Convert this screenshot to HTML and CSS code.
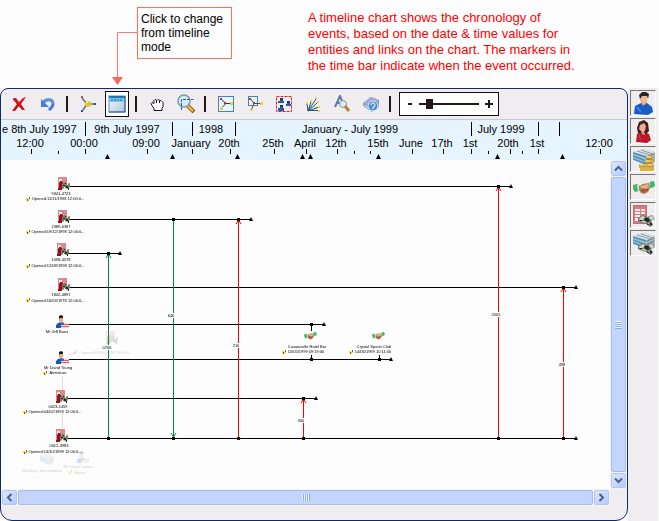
FILE: index.html
```html
<!DOCTYPE html>
<html lang="en">
<head>
<meta charset="utf-8">
<title>Timeline chart</title>
<link rel="stylesheet" href="styles.css">
</head>
<body>
<svg class="defs" aria-hidden="true">
  <symbol id="account" viewBox="0 0 13 14">
    <rect x="1" y="0" width="9" height="10" fill="#d88a8e"/>
    <path d="M2 2h3v3H2zM6 6h3v2H6z" fill="#f8e6e6"/>
    <path d="M3 4h2v1h1v4H5v4H1v-2l1-1V6l1-1z" fill="#96101c"/>
    <path d="M5 7l3-2 2 2 3-1v4l-2 2-3-1-3 1z" fill="#77806a"/>
    <path d="M6 8h2v1H6zM9 9h2v2H9zM8 6h1v1H8zM11 11h1v2h-1z" fill="#23281e"/>
    <path d="M7 10h1v1H7zM10 7h1v1h-1z" fill="#e9eee0"/>
  </symbol>
  <symbol id="person" viewBox="0 0 13 14">
    <path d="M0 10l2-2 3-1 4 1 1 2v3H0z" fill="#145caf"/>
    <path d="M3 2h4v4L5 8 3 6z" fill="#e7ab86"/>
    <path d="M3 4V1l2-1 2 1v2H4z" fill="#20191a"/>
    <rect x="5" y="8" width="8" height="5" fill="#f3dadd"/>
    <path d="M5 9h8v1H5zM5 11h8v1H5z" fill="#dc6470"/>
    <rect x="5" y="8" width="3" height="2" fill="#4361b1"/>
  </symbol>
  <symbol id="shake" viewBox="0 0 22 14">
    <path d="M0 4l4-1 3 3-1 4-4 1-2-3zM21 0l-5 1-1 5 4 1 3-2z" fill="#3dba64"/>
    <path d="M4 4l3 1v4l-2 1zM17 1l-2 1v4l2 1z" fill="#d5f0da"/>
    <path d="M6 5l4-2 6-1 1 5-2 4-4 2-3-1-2-3z" fill="#b8744d"/>
    <path d="M7 5l4-1 4-1 1 3-3 2-5-1z" fill="#deb08c"/>
    <path d="M8 9l3 2M10 8l3 2M13 8l2 1" stroke="#774227" fill="none"/>
  </symbol>
  <symbol id="check" viewBox="0 0 4 4">
    <path d="M0 1h2v1h2v1H3v1H1V3H0z" fill="#f0e023"/><path d="M3 0h1v2H3zM1 2h1v2H1z" fill="#666235"/>
  </symbol>
  <symbol id="servers" viewBox="0 0 22 20">
    <path d="M0 3l10-3 12 3v10l-8 4L0 10z" fill="#a7bac5"/>
    <path d="M0 3l10-3 12 3-8 4z" fill="#dde3e5"/>
    <path d="M0 4l13 4M0 7l13 5M0 10l13 5" stroke="#4594c6" stroke-width="1.500"/>
    <path d="M4 2l13 4M8 1l12 4" stroke="#8f9da4"/>
    <path d="M14 8l7-3M14 11l7-3M14 14l7-3" stroke="#717b7e"/>
  </symbol>
  <symbol id="cash" viewBox="0 0 17 13">
    <path d="M0 4l5-3 4 2 5-2 3 4-4 2 2 4-3 2-3-3-5-1-4-2z" fill="#6b7468"/>
    <path d="M1 5l4-3 2 2-4 3zM11 3l3-1 2 3-3 1zM10 9l3 2M3 8l4-1 1 2" fill="#d4dacd" stroke="#b9c2b2"/>
    <path d="M6 4h4l2 2-2 2-3-1zM12 9h2v2h-2zM9 10h2v1H9zM2 6h2v1H2z" fill="#20291f"/>
  </symbol>
</svg>

<header class="notes">
  <svg class="pointer" viewBox="0 0 25 88" aria-hidden="true">
    <path d="M25 32.500H5.500V79" fill="none" stroke="#fd7b6c"/>
    <path d="M0 77h11l-5.500 8z" fill="#fb6a58"/>
  </svg>
  <p class="callout">Click to change<br>from timeline<br>mode</p>
  <p class="intro">A timeline chart shows the chronology of<br>events, based on the date &amp; time values for<br>entities and links on the chart. The markers in<br>the time bar indicate when the event occurred.</p>
</header>

<main class="app">
  <section class="window">
    <div class="toolbar">
      <div class="group">
        <button aria-label="Delete"><svg width="18" height="18"><path d="M3 3l3 0 3 4 4-4 3-1-5 7 4 6-3 0-3-4-4 5-3 0 5-7z" fill="#e3131a"/><path d="M3 4l9 10M4 15l5-6" stroke="#8c1212" fill="none"/></svg></button>
        <button aria-label="Undo"><svg width="18" height="18"><path d="M4 8c3-5 10-4 10 1 0 3-2 4-4 6" fill="none" stroke="#477bd0" stroke-width="3"/><path d="M4 8c3-5 10-4 10 1" fill="none" stroke="#8db4ee"/><path d="M2 4v8h8z" fill="#4a7ed2"/></svg></button>
      </div>
      <span class="divider"></span>
      <div class="group">
        <button aria-label="Link layout"><svg width="18" height="18"><path d="M3 3l5 6-4 6M9 9h7" fill="none" stroke="#4b718c" stroke-width="1.500"/><circle cx="9" cy="9" r="3" fill="#e7c617"/><path d="M7 7h2v1H7z" fill="#fff9b4"/><path d="M2 1h2v2H2z" fill="#e53c34"/><path d="M2 15h2v2H2zM15 8h2v2h-2z" fill="#3345bd"/></svg></button>
        <button class="active" aria-label="Timeline mode" aria-pressed="true"><svg width="18" height="18"><defs><linearGradient id="pane" x2="1" y2="1"><stop stop-color="#fff"/><stop offset="1" stop-color="#aac4df"/></linearGradient></defs><rect x="1" y="1" width="16" height="16" fill="url(#pane)" stroke="#5c91bd"/><path d="M1 1h16v6H1z" fill="#71c7ee"/><path d="M1 1h16v2H1z" fill="#286fac"/><path d="M3 5h12" stroke="#246295" stroke-dasharray="2 1"/><path d="M17 1v16H1" fill="none" stroke="#315b88"/></svg></button>
      </div>
      <span class="divider"></span>
      <div class="group">
        <button aria-label="Pan"><svg width="18" height="18"><path d="M6 15.500v-2l-2-3-1-2 1-1 2 1V5.500l1-1 2 1 1-1 2 1 1 0 1 1 1 1v4l-1 2v2z" fill="#fff" stroke="#111"/><path d="M8.500 6v2M11.500 6v2" stroke="#111"/></svg></button>
        <button aria-label="Zoom to area"><svg width="20" height="20"><path d="M11 11l7 7" stroke="#a36318" stroke-width="4"/><path d="M11 11l6 6" stroke="#f2bd55" stroke-width="2"/><circle cx="8" cy="7" r="6" fill="#d6e9f6" stroke="#8297a6" stroke-width="1.500"/><path d="M5.500 16V5.500h12" fill="none" stroke="#1464c7" stroke-dasharray="3 1"/></svg></button>
      </div>
      <span class="divider"></span>
      <div class="group">
        <button aria-label="Fit chart"><svg width="18" height="18"><rect x="1.500" y="1.500" width="15" height="15" fill="#eaf4fd" stroke="#4384bb"/><path d="M4 4l5 4.500-5 5M9 8.500h6" fill="none" stroke="#203848"/><path d="M3 3h2v2H3zM7 7h2v2H7z" fill="#e41f2a"/><path d="M13 7h3v3h-3zM3 12h3v3H3z" fill="#e9d42d"/></svg></button>
        <button aria-label="Actual size"><svg width="18" height="18"><rect x="2.500" y="1.500" width="9" height="9" fill="#eaf4fd" stroke="#4384bb"/><path d="M4 3l4 5.500-3 7M8 8.500h7" fill="none" stroke="#3e5361"/><path d="M3 3h2v2H3zM7 7h2v2H7z" fill="#e41f2a"/><path d="M14 7h3v3h-3zM4 14h3v2H4z" fill="#e9d42d"/></svg></button>
        <button aria-label="Select group"><svg width="18" height="18"><rect x="1.500" y="1.500" width="15" height="15" fill="none" stroke="#f01c24" stroke-dasharray="3 1"/><path d="M5 3h3v3h1v2H3V6h2zM12 6h3v3h1v2h-5V9h1zM5 10h3v3h1v3H3v-3h2z" fill="#2359ae"/><path d="M5 3h3v2H5zM12 6h3v2h-3zM5 10h3v2H5z" fill="#163b6f"/></svg></button>
        <button aria-label="Expand"><svg width="18" height="18"><path d="M4 16L3 9M4 16L7 7M4 16l8-12M4 16l9-8M4 16l11-4M4 15.500h11" stroke="#255a6d"/><path d="M2 7h2v2H2zM6 5h2v2H6zM11 2h2v2h-2zM13 6h2v2h-2zM14 11h2v2h-2zM14 15h2v2h-2z" fill="#e5d94c"/></svg></button>
        <button aria-label="Find"><svg width="18" height="18"><path d="M2 12L7 1l4 10M4 8h5" fill="none" stroke="#5a78a9" stroke-width="2"/><circle cx="10" cy="9" r="3.500" fill="#dbe8f1" stroke="#8897a4"/><path d="M12 11l4 5" stroke="#ba8335" stroke-width="3"/></svg></button>
        <button aria-label="Help"><svg width="18" height="18"><path d="M1 8l8-6 8 3v7l-7 5-9-6z" fill="#8c93c6"/><path d="M1 8l8-6 8 3-8 6z" fill="#a6aad8"/><path d="M2 10l7 5" stroke="#e7e8f7"/><circle cx="11" cy="11" r="5" fill="#4e8fd1" stroke="#dfedfa"/><path d="M9 10q0-2 2-2t2 2-2 2v2" fill="none" stroke="#fff"/></svg></button>
      </div>
      <span class="divider"></span>
      <div class="zoom">
        <button class="step minus" aria-label="Zoom out"></button>
        <input type="range" min="0" max="100" value="14" aria-label="Zoom">
        <button class="step plus" aria-label="Zoom in"></button>
      </div>
    </div>

    <svg class="timebar" role="img" aria-label="Time bar">
      <g class="major">
        <path d="M84.500 2v14M171.500 2v14M191.500 2v14M234.500 2v14M470.500 2v14M537.500 2v14M558.500 2v14"/>
        <path d="M30.500 29v5M84.500 29v5M146.500 29v5M191.500 29v5M229.500 29v5M273.500 29v5M305.500 29v5M336.500 29v5M411.500 29v5M442.500 29v5M470.500 29v5M509.500 29v5M537.500 29v5M599.500 29v5"/>
        <path d="M57.500 31v3M353.500 31v3M369.500 31v3M487.500 31v3M521.500 31v3"/>
      </g>
      <path d="M104 39h5l-2.500-5zM169 39h5l-2.500-5zM234 39h5l-2.500-5zM299 39h5l-2.500-5zM307 39h5l-2.500-5zM375 39h5l-2.500-5zM494 39h5l-2.500-5zM559 39h5l-2.500-5z"/>
      <g>
        <text x="1" y="13" class="start">e 8th July 1997</text>
        <text x="126" y="13">9th July 1997</text>
        <text x="210" y="13">1998</text>
        <text x="349" y="13">January - July 1999</text>
        <text x="500" y="13">July 1999</text>
        <text x="29" y="27">12:00</text>
        <text x="83" y="27">00:00</text>
        <text x="145" y="27">09:00</text>
        <text x="190" y="27">January</text>
        <text x="228" y="27">20th</text>
        <text x="272" y="27">25th</text>
        <text x="304" y="27">April</text>
        <text x="335" y="27">12th</text>
        <text x="377" y="27">15th</text>
        <text x="410" y="27">June</text>
        <text x="441" y="27">17th</text>
        <text x="469" y="27">1st</text>
        <text x="507" y="27">20th</text>
        <text x="536" y="27">1st</text>
        <text x="598" y="27">12:00</text>
      </g>
    </svg>

    <div class="viewport">
      <svg class="chart" role="img" aria-label="Timeline of accounts, people and events">
        <g class="ghost">
          <use href="#account" x="104" y="171" width="13" height="14"/>
          <use href="#check" x="72" y="190" width="4" height="4"/>
          <text x="105" y="194">Opened:21/08/1998 12:00:0...</text>
          <use href="#servers" x="39" y="294" width="14" height="13"/>
          <text x="41" y="312">Brinkleys International</text>
          <use href="#person" x="76" y="291" width="12" height="13"/>
          <text x="77" y="308">Mr Diane Lookie</text>
          <use href="#check" x="67" y="310" width="4" height="4"/>
          <text x="79" y="314">British</text>
        </g>
        <path class="faint" d="M67 196l9-4M61.500 216v14M61.500 253v16"/>
        <g class="lanes">
          <path d="M69 26.500h441M69 59.500h181M67 93.500h52M69 127.500h506M67 164.500h256M67 199.500h323M67 238.500h248M67 278.500h508M310.500 164v7M310.500 195v5M378.500 195v5"/>
        </g>
        <g class="credit"><path class="crisp" d="M107.500 95v182M172.500 60v216"/><path d="M105 98l2.500-4 2.500 4M170 273l2.500 4 2.500-4"/></g>
        <g class="debit"><path class="crisp" d="M237.500 61v216M497.500 28v249M562.500 129v148M302.500 240v37"/><path d="M235 64l2.500-4 2.500 4M495 31l2.500-4 2.500 4M560 132l2.500-4 2.500 4M300 243l2.500-4 2.500 4"/></g>
        <path d="M106 92h3v3h-3zM171 58h3v3h-3zM236 58h3v3h-3zM496 25h3v3h-3zM561 126h3v3h-3zM309 163h3v3h-3zM309 198h3v3h-3zM377 198h3v3h-3zM301 237h3v3h-3zM106 277h3v3h-3zM171 277h3v3h-3zM236 277h3v3h-3zM301 277h3v3h-3zM496 277h3v3h-3zM561 277h3v3h-3z"/>
        <path d="M508 28h4l-2-4zM248 61h4l-2-4zM117 95h4l-2-4zM573 129h4l-2-4zM321 166h4l-2-4zM388 201h4l-2-4zM313 240h4l-2-4zM573 280h4l-2-4z"/>
        <path class="gap" d="M101 185h10v5h-10zM167 153h9v5h-9zM232 183h9v5h-9zM491 152h10v5h-10zM557 202h9v5h-9zM297 258h9v5h-9z"/>
        <g>
          <text x="106" y="189">0766</text>
          <text x="170" y="157">640</text>
          <text x="235" y="187">210</text>
          <text x="495" y="156">2005</text>
          <text x="561" y="206">498</text>
          <text x="300" y="262">300</text>
        </g>
        <g>
          <use href="#account" x="56" y="17" width="13" height="14"/>
          <text x="60" y="35">9341-4723</text>
          <use href="#check" x="25" y="37" width="4" height="4"/>
          <text x="57" y="40">Opened:11/11/1998 12:00:0...</text>
          <use href="#account" x="56" y="50" width="13" height="14"/>
          <text x="60" y="68">2389-6387</text>
          <use href="#check" x="25" y="70" width="4" height="4"/>
          <text x="57" y="73">Opened:19/12/1998 12:00:0...</text>
          <use href="#account" x="55" y="83" width="13" height="14"/>
          <text x="60" y="101">1098-4578</text>
          <use href="#check" x="25" y="104" width="4" height="4"/>
          <text x="57" y="107">Opened:12/08/1998 12:00:0...</text>
          <use href="#account" x="56" y="118" width="13" height="14"/>
          <text x="60" y="136">1842-4891</text>
          <use href="#check" x="25" y="138" width="4" height="4"/>
          <text x="57" y="142">Opened:16/03/1978 12:00:0...</text>
          <use href="#person" x="55" y="155" width="13" height="14"/>
          <text x="56" y="173">Mr Jeff Banx</text>
          <use href="#person" x="55" y="191" width="13" height="14"/>
          <text x="57" y="209">Mr David Young</text>
          <use href="#check" x="42" y="211" width="4" height="4"/>
          <text x="57" y="214">American</text>
          <use href="#account" x="54" y="230" width="13" height="14"/>
          <text x="57" y="248">0023-1459</text>
          <use href="#check" x="22" y="250" width="4" height="4"/>
          <text x="54" y="253">Opened:04/02/1993 12:00:0...</text>
          <use href="#account" x="54" y="269" width="13" height="14"/>
          <text x="58" y="287">0012-3983</text>
          <use href="#check" x="22" y="290" width="4" height="4"/>
          <text x="54" y="293">Opened:14/10/1998 12:00:0...</text>
          <use href="#shake" x="303" y="172" width="13" height="8"/>
          <text x="306" y="188">Casanoville Hotel Bar</text>
          <use href="#check" x="281" y="190" width="4" height="4"/>
          <text x="305" y="193">10/05/1999 09:19:00</text>
          <use href="#shake" x="371" y="172" width="13" height="8"/>
          <text x="373" y="188">Crystal Sports Club</text>
          <use href="#check" x="348" y="190" width="4" height="4"/>
          <text x="372" y="193">14/06/1999 10:11:00</text>
        </g>
      </svg>
      <div class="scroll vertical">
        <button aria-label="Scroll up"><svg width="9" height="9"><path d="M1 6.500l3.500-3.500L8 6.500"/></svg></button>
        <div class="thumb"><i></i></div>
        <button aria-label="Scroll down"><svg width="9" height="9"><path d="M1 2.500L4.500 6 8 2.500"/></svg></button>
      </div>
      <div class="scroll horizontal">
        <button aria-label="Scroll left"><svg width="9" height="9"><path d="M6.500 1L3 4.500 6.500 8"/></svg></button>
        <div class="thumb"><i></i></div>
        <button aria-label="Scroll right"><svg width="9" height="9"><path d="M2.500 1L6 4.500 2.500 8"/></svg></button>
      </div>
    </div>
  </section>

  <aside class="palette">
    <button aria-label="Man"><svg width="23" height="23"><path d="M2 22l1-8 6-3 6 0 5 4 1 5-5 3z" fill="#185cc5"/><path d="M9 11l2 3 4-3-1-4H9z" fill="#d99369"/><path d="M8 3h7v6l-3 4-4-4z" fill="#efb890"/><path d="M8 7L7 3l3-3 4 0 3 2-1 5-1-3-5 0z" fill="#2a2528"/><path d="M5 15l4 5" stroke="#3d83e8" stroke-width="2"/></svg></button>
    <button aria-label="Woman"><svg width="23" height="23"><path d="M4 22l1-8 5-3 7 3 2 6-4 3z" fill="#b91929"/><path d="M6 13L5 8l2-6 5-2 4 3 1 8-3 3-4-1z" fill="#441d20"/><path d="M8 5l4-2 2 3-1 5-3 1-3-3z" fill="#e9ae93"/><path d="M9 11h3l1 4-3-1z" fill="#e0a083"/><path d="M7 15l2 5" stroke="#e14351"/></svg></button>
    <button aria-label="Bank account"><svg width="23" height="23"><use href="#servers" x="1" y="1" width="22" height="20"/><path d="M14 8h7v3h-7zM13 12h8v3h-8zM7 16h7v3H7zM15 16h7v3h-7zM8 20h7v3H8zM15 20h7v3h-7z" fill="#e2b33b"/><path d="M14 11h7M13 15h8M7 19h15" stroke="#9b701b"/><path d="M15 9h4M14 13h4M8 17h4M16 17h4" stroke="#fae185"/></svg></button>
    <button aria-label="Meeting"><svg width="23" height="23"><use href="#shake" x="1" y="5" width="22" height="14"/></svg></button>
    <button aria-label="Transaction record"><svg width="23" height="23"><rect x="1.500" y="1.500" width="13" height="18" fill="#d87b83" stroke="#c46a73"/><path d="M3 5h5v2H3zM3 8h5v2H3zM3 11h5v2H3zM3 14h5v3H3zM9 5h4v2H9zM9 8h4v2H9z" fill="#faedee"/><use href="#cash" x="6" y="10" width="17" height="13"/></svg></button>
    <button aria-label="Cash account"><svg width="23" height="23"><use href="#servers" x="1" y="1" width="22" height="20"/><use href="#cash" x="6" y="10" width="17" height="13"/></svg></button>
  </aside>
</main>
</body>
</html>
```
FILE: styles.css
```css
* { box-sizing: border-box; }

body {
  margin: 0;
  min-height: 100vh;
  display: flex;
  flex-direction: column;
  background: #fdfdfd;
  color: #000;
  font-family: "Liberation Sans", Arial, sans-serif;
  font-size: 12px;
}

p { margin: 0; }

button {
  display: flex;
  align-items: center;
  justify-content: center;
  padding: 0;
  border: 0;
  background: none;
}

.defs { position: absolute; width: 0; height: 0; }

/* Notes above the window */
.notes {
  display: flex;
  align-items: flex-start;
  padding-left: 112px;
}

.pointer { width: 25px; height: 88px; flex: none; }

.callout {
  width: 95px;
  margin-top: 7px;
  padding: 4px 3px;
  border: 1px solid #fd6f5a;
  line-height: 14px;
  white-space: nowrap;
}

.intro {
  margin: 10px 0 0 76px;
  color: #f00;
  font-size: 13px;
  line-height: 16px;
  white-space: nowrap;
}

/* Window and side palette */
.app { flex: 1; display: flex; }

.window {
  flex: 1;
  min-width: 0;
  display: flex;
  flex-direction: column;
  padding-bottom: 14px;
  border: 1px solid #102a66;
  border-radius: 8px 8px 12px 12px;
  background: #f0edf0;
  overflow: hidden;
}

.toolbar {
  display: flex;
  align-items: center;
  height: 31px;
  padding-left: 6px;
  border-bottom: 1px solid #c8c8cc;
}

.group { display: flex; gap: 5px; align-items: center; }
.group button { width: 24px; height: 26px; }
.group .active { border: 1px solid #111; background: #fff; }

.divider {
  width: 2px;
  height: 16px;
  margin: 0 8px 0 6px;
  background: #231815;
}

.zoom {
  display: flex;
  align-items: center;
  width: 100px;
  height: 24px;
  border: 1px solid #111;
  background: #fff;
}

.step { flex: 1; height: 22px; }
.minus::before { content: ""; width: 4px; height: 2px; background: #231815; }
.plus::before {
  content: "";
  width: 8px;
  height: 8px;
  background:
    linear-gradient(#231815, #231815) center / 8px 2px no-repeat,
    linear-gradient(#231815, #231815) center / 2px 8px no-repeat;
}

.zoom input {
  appearance: none;
  width: 60px;
  height: 20px;
  margin: 0;
  background: linear-gradient(#231815, #231815) center / 100% 2px no-repeat;
}

.zoom input::-webkit-slider-thumb {
  appearance: none;
  width: 7px;
  height: 10px;
  background: #231815;
}

.timebar {
  width: 100%;
  height: 40px;
  background: #e6f4ff;
  font-size: 11px;
}

.timebar text, .chart text { text-anchor: middle; }
.timebar .start { text-anchor: start; }
.major { stroke: #000; shape-rendering: crispEdges; }

/* Chart and scroll bars */
.viewport {
  flex: 1;
  display: grid;
  grid-template-columns: 1fr 17px;
  grid-template-rows: 1fr 17px;
}

.chart {
  width: 100%;
  height: 100%;
  min-height: 329px;
  background: #fdfdfd;
  font-size: 4px;
}

.ghost { opacity: .2; }
.faint { stroke: #f0d4d8; fill: none; }
.lanes { stroke: #000; }
.lanes, .crisp { shape-rendering: crispEdges; }
.credit { stroke: #07834a; fill: none; }
.debit { stroke: #f00; fill: none; }
.gap { fill: #fdfdfd; }

.scroll { display: flex; gap: 1px; padding: 1px; background: #f4f3f5; }
.vertical { flex-direction: column; }

.scroll button {
  flex: none;
  width: 15px;
  height: 15px;
  border: 1px solid #b2c6f2;
  border-radius: 2px;
  background: linear-gradient(135deg, #dce8ff, #b4cafa);
}

.scroll path { fill: none; stroke: #4a6185; stroke-width: 2; }

.thumb {
  flex: 1;
  display: flex;
  align-items: center;
  justify-content: center;
  border: 1px solid #a4bdec;
  border-radius: 2px;
  background: #c3d4fd;
}

.vertical .thumb i {
  width: 7px;
  height: 8px;
  background: repeating-linear-gradient(#eef4ff 0 1px, #8cabed 1px 2px);
}

.horizontal .thumb i {
  width: 8px;
  height: 7px;
  background: repeating-linear-gradient(90deg, #eef4ff 0 1px, #8cabed 1px 2px);
}

.palette {
  width: 31px;
  display: flex;
  flex-direction: column;
  gap: 2px;
  padding: 2px;
  border-right: 2px solid #f8f7f8;
  background: #f0edf0;
}

.palette button {
  width: 26px;
  height: 26px;
  border: 1px solid #fff;
  border-top-color: #77776c;
  border-left-color: #77776c;
}
```
